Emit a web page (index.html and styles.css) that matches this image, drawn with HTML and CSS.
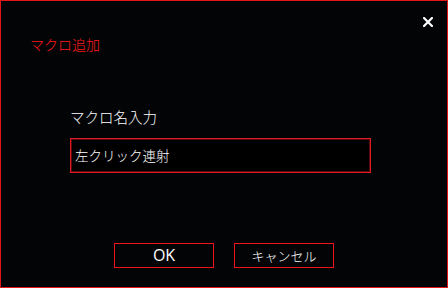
FILE: index.html
```html
<!DOCTYPE html>
<html lang="ja">
<head>
<meta charset="utf-8">
<link rel="stylesheet" href="styles.css">
</head>
<body>
<div class="window">
  <div class="header">
    <div class="title">マクロ追加</div>
    <div class="close" aria-label="close">
      <svg width="10" height="10" viewBox="0 0 10 10"><path d="M1 1 L9 9 M9 1 L1 9" stroke="#fff" stroke-width="2.2" stroke-linecap="square"/></svg>
    </div>
  </div>
  <div class="content">
    <div class="label">マクロ名入力</div>
    <div class="input">左クリック連射</div>
  </div>
  <div class="buttons">
    <div class="btn ok">OK</div>
    <div class="btn">キャンセル</div>
  </div>
</div>
</body>
</html>
```
FILE: styles.css
```css
html, body {
  margin: 0;
  padding: 0;
  background: #030406;
}
.window {
  width: 448px;
  height: 288px;
  box-sizing: border-box;
  border: 1px solid #e8141c;
  background: #030406;
  display: flex;
  flex-direction: column;
  font-family: "Noto Sans CJK JP", "Noto Sans", sans-serif;
  font-weight: 300;
  color: #fff;
}
.header {
  display: flex;
  justify-content: space-between;
  align-items: flex-start;
  padding: 0 14px 0 29px;
}
.title {
  margin-top: 33px;
  font-size: 14px;
  line-height: 20px;
  color: #ff1a1a;
}
.close {
  margin-top: 16px;
  width: 10px;
  height: 10px;
  display: flex;
}
.content {
  padding-left: 69px;
  margin-top: 53px;
  display: flex;
  flex-direction: column;
}
.label {
  font-size: 14.5px;
  line-height: 20px;
}
.input {
  margin-top: 11px;
  width: 301px;
  height: 35px;
  box-sizing: border-box;
  border: 1px solid #e01a22;
  box-shadow: inset 0 0 0 1px #5a0a0e;
  background: #000;
  font-size: 13.5px;
  line-height: 33px;
  padding-left: 4px;
}
.buttons {
  margin-top: auto;
  margin-bottom: 19px;
  padding-left: 113px;
  display: flex;
  gap: 20px;
}
.btn {
  width: 100px;
  height: 25px;
  box-sizing: border-box;
  border: 1px solid #f01418;
  background: #030406;
  display: flex;
  align-items: center;
  justify-content: center;
  font-size: 13px;
  line-height: 23px;
}
.btn.ok {
  font-family: "Open Sans", "Liberation Sans", sans-serif;
  font-weight: 400;
  font-size: 16px;
}
```
